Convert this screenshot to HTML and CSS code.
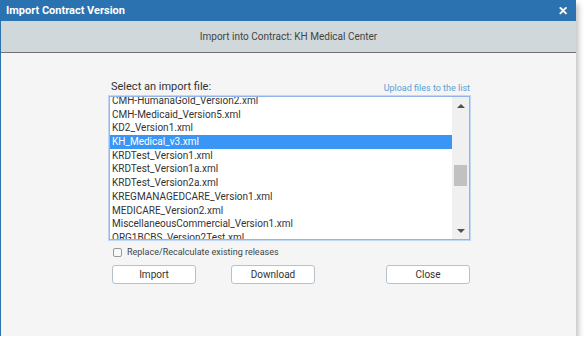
FILE: index.html
```html
<!DOCTYPE html>
<html lang="en">
<head>
    <meta charset="UTF-8">
    <title>Import Contract Version</title>
    <link rel="stylesheet" href="styles.css">
</head>
<body>
    <!-- Dialog -->
    <div class="dialog">
        <div class="dialog-title">
            <span>Import Contract Version</span>
            <span class="close-x">&#10005;</span>
        </div>
        <div class="dialog-sub">Import into Contract: KH Medical Center</div>

        <div class="dialog-body">
            <div class="file-head">
                <span>Select an import file:</span>
                <a class="upload-link" href="#">Upload files to the list</a>
            </div>

            <div class="file-list">
                <div class="file-items">
                    <div class="file-item">CMH-HumanaGold_Version2.xml</div>
                    <div class="file-item">CMH-Medicaid_Version5.xml</div>
                    <div class="file-item">KD2_Version1.xml</div>
                    <div class="file-item selected">KH_Medical_v3.xml</div>
                    <div class="file-item">KRDTest_Version1.xml</div>
                    <div class="file-item">KRDTest_Version1a.xml</div>
                    <div class="file-item">KRDTest_Version2a.xml</div>
                    <div class="file-item">KREGMANAGEDCARE_Version1.xml</div>
                    <div class="file-item">MEDICARE_Version2.xml</div>
                    <div class="file-item">MiscellaneousCommercial_Version1.xml</div>
                    <div class="file-item">ORG1BCBS_Version2Test.xml</div>
                </div>
                <div class="scrollbar">
                    <div class="arrow up"></div>
                    <div class="track"><div class="thumb"></div></div>
                    <div class="arrow down"></div>
                </div>
            </div>

            <label class="replace-check">
                <span class="box"></span>
                Replace/Recalculate existing releases
            </label>

            <div class="buttons">
                <button class="btn">Import</button>
                <button class="btn btn-mid">Download</button>
                <button class="btn btn-right">Close</button>
            </div>
        </div>
    </div>
</body>
</html>
```

FILE: styles.css
```css
body {
    margin: 0;
    background: #fff;
    font-family: Roboto, "Liberation Sans", sans-serif;
}

.dialog {
    width: 575px;
    height: 336px;
    background: #f5f5f5;
    border-left: 1px solid #2a72b0;
    box-shadow: 3px 4px 5px rgba(0, 0, 0, 0.22);
    display: flex;
    flex-direction: column;
}

.dialog-title {
    height: 21px;
    background: #2a72b0;
    color: #fff;
    font-size: 11px;
    font-weight: bold;
    display: flex;
    align-items: center;
    justify-content: space-between;
    padding: 0 8px 0 5px;
}

.close-x {
    font-size: 12px;
    font-weight: bold;
}

.dialog-sub {
    height: 31px;
    background: #d0d8db;
    border-bottom: 1px solid #6e7275;
    color: #444;
    font-size: 10px;
    display: flex;
    align-items: center;
    justify-content: center;
}

.dialog-body {
    padding: 27px 0 0 108px;
    width: 361px;
}

.file-head {
    display: flex;
    justify-content: space-between;
    align-items: flex-end;
    font-size: 11px;
    color: #333;
    padding: 0 0 3px 2px;
}

.upload-link {
    color: #5a9fd4;
    font-size: 9px;
    text-decoration: none;
}

.file-list {
    height: 142px;
    border: 1px solid #93b4ea;
    box-shadow: 0 0 0 1px #c2d6f6;
    background: #fff;
    display: flex;
    overflow: hidden;
}

.file-items {
    flex: 1;
    margin-top: -3px;
    font-size: 10px;
    color: #333;
}

.file-item {
    height: 13.7px;
    line-height: 13.7px;
    padding-left: 2px;
    white-space: nowrap;
}

.file-item.selected {
    background: #3a96f5;
    color: #fff;
}

.scrollbar {
    width: 17px;
    background: #f0f0f0;
    display: flex;
    flex-direction: column;
}

.arrow {
    height: 17px;
    display: flex;
    align-items: center;
    justify-content: center;
}

.arrow::before {
    content: "";
    border-left: 4px solid transparent;
    border-right: 4px solid transparent;
}

.arrow.up::before {
    border-bottom: 4px solid #505050;
}

.arrow.down::before {
    border-top: 4px solid #505050;
}

.track {
    flex: 1;
    padding-top: 51px;
}

.thumb {
    height: 21px;
    margin: 0 2px;
    background: #c1c1c1;
}

.replace-check {
    display: flex;
    align-items: center;
    gap: 5px;
    font-size: 9px;
    color: #444;
    margin: 7px 0 0 4px;
}

.replace-check .box {
    width: 7px;
    height: 7px;
    border: 1px solid #999;
    border-radius: 2px;
    background: #f8f8f8;
}

.buttons {
    display: flex;
    margin-top: 8px;
    padding-left: 3px;
}

.btn {
    width: 84px;
    height: 19px;
    background: #fff;
    border: 1px solid #b6c2cb;
    border-radius: 3px;
    font-family: Roboto, "Liberation Sans", sans-serif;
    font-size: 10px;
    color: #333;
    padding: 0;
}

.btn-mid {
    margin-left: 35px;
}

.btn-right {
    margin-left: auto;
}
```
